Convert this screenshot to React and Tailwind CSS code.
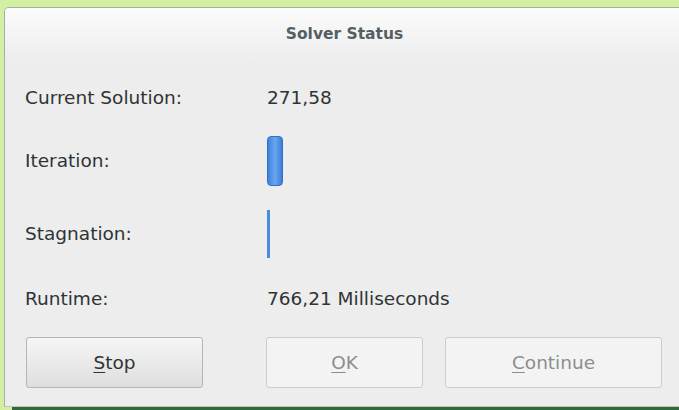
export default function App() {
  const font = { fontFamily: '"DejaVu Sans", "Open Sans", sans-serif' };
  return (
    <div className="w-[679px] h-[410px] bg-[#d3f0a2] overflow-hidden flex flex-col" style={font}>
      <div className="flex-1 flex pt-[7px] pl-[4px]">
        {/* dialog window */}
        <div className="flex-1 -mr-[6px] flex flex-col rounded-tl-[5px] border border-[#a9ada8] border-b-[#c4c4c4] bg-[#ededed] overflow-hidden">
          <div className="h-[54px] shrink-0 flex items-center justify-center bg-gradient-to-b from-[#fbfbfb] to-[#ededed]">
            <span className="text-[15.5px] font-bold text-[#555f63]">Solver Status</span>
          </div>
          <div className="flex flex-col text-[18.5px] text-[#2e3436] pl-[20px]">
            <div className="h-[30px] mt-[21px] flex items-center">
              <span className="w-[242px]">Current Solution:</span>
              <span>271,58</span>
            </div>
            <div className="h-[50px] mt-[23px] flex items-center">
              <span className="w-[242px]">Iteration:</span>
              {/* progress pulse block */}
              <div className="w-[16px] h-[50px] rounded-[4px] border border-[#2f6fc9] bg-gradient-to-r from-[#3f82de] via-[#6aa6ee] to-[#3a7dd9]" />
            </div>
            <div className="h-[50px] mt-[23px] flex items-center">
              <span className="w-[242px]">Stagnation:</span>
              <div className="w-[3px] h-[48px] bg-[#4a8be2]" />
            </div>
            <div className="h-[30px] mt-[25px] flex items-center">
              <span className="w-[242px]">Runtime:</span>
              <span>766,21 Milliseconds</span>
            </div>
          </div>
          <div className="flex mt-[23px] pl-[21px]">
            <button className="w-[177px] h-[51px] rounded-[3px] border border-[#b3b6b2] bg-gradient-to-b from-[#f6f6f6] to-[#dedede] text-[18.5px] text-[#2e3436]">
              <span className="underline underline-offset-[3px] decoration-1">S</span>top
            </button>
            <button className="ml-[63px] w-[157px] h-[51px] rounded-[3px] border border-[#cdcdcd] bg-[#f3f3f3] text-[18.5px] text-[#8b8e8f]">
              <span className="underline underline-offset-[3px] decoration-1">O</span>K
            </button>
            <button className="ml-[22px] w-[217px] h-[51px] rounded-[3px] border border-[#cdcdcd] bg-[#f3f3f3] text-[18.5px] text-[#8b8e8f]">
              <span className="underline underline-offset-[3px] decoration-1">C</span>ontinue
            </button>
          </div>
        </div>
      </div>
      <div className="h-[3px] bg-[#2d6b3a] ml-[12px]" />
    </div>
  );
}
